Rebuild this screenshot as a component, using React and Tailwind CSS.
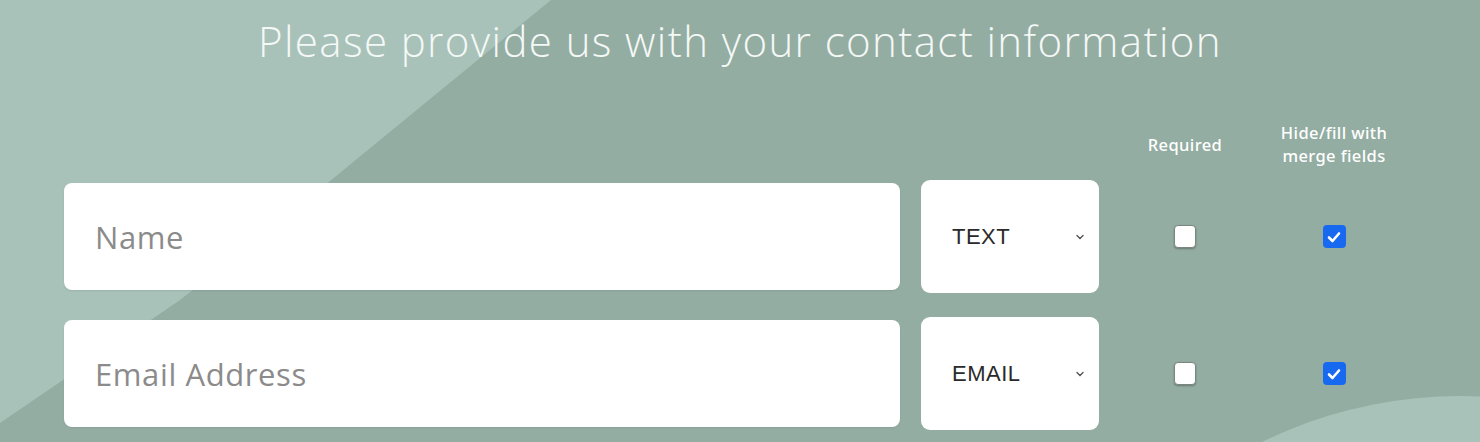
import React from "react";

function Box({ checked }) {
  if (checked) {
    return (
      <div className="w-[23px] h-[23px] rounded-[4px] bg-[#1769f0] flex items-center justify-center">
        <svg width="16" height="16" viewBox="0 0 16 16">
          <path d="M3 8.5 L6.5 12 L13 4.5" fill="none" stroke="white" strokeWidth="2.6" strokeLinecap="round" strokeLinejoin="round" />
        </svg>
      </div>
    );
  }
  return <div className="w-[22px] h-[23px] rounded-[4px] bg-white border border-[#7a8781] shadow-[0_1px_2px_rgba(0,0,0,0.3)]" />;
}

function Row({ placeholder, type, mt }) {
  return (
    <div className={`flex items-center ${mt}`}>
      <input
        readOnly
        placeholder={placeholder}
        className="w-[836px] h-[107px] rounded-[8px] bg-white pl-[31px] text-[31px] tracking-[0.6px] text-[#555] placeholder:text-[#8b8b8b] outline-none shadow-[0_1px_2px_rgba(0,0,0,0.08)]"
        style={{ fontFamily: '"Open Sans", sans-serif' }}
      />
      <div className="ml-[21px] w-[178px] h-[113px] rounded-[9px] bg-white flex items-center pl-[31px] pr-[14px] justify-between">
        <span className="text-[22px] text-[#2a2a2a] tracking-[0.5px]" style={{ fontFamily: '"Liberation Sans", Arial, sans-serif' }}>{type}</span>
        <svg width="10" height="8" viewBox="0 0 10 8">
          <path d="M2 2.5 L5 5.5 L8 2.5" fill="none" stroke="#555" strokeWidth="1.4" strokeLinecap="round" />
        </svg>
      </div>
      <div className="w-[172px] flex justify-center">
        <Box checked={false} />
      </div>
      <div className="w-[126px] flex justify-center">
        <Box checked={true} />
      </div>
    </div>
  );
}

export default function App() {
  return (
    <div className="relative w-[1480px] h-[442px] overflow-hidden bg-[#94ada2]">
      <svg className="absolute inset-0" width="1480" height="442" viewBox="0 0 1480 442">
        <polygon points="0,0 551,0 330,181 180,300 0,423" fill="#a8c2b9" />
        <circle cx="1460" cy="845" r="449" fill="#a8c2b9" />
      </svg>
      <div className="relative flex flex-col">
        <h1
          className="text-center text-[42px] leading-[50px] mt-[16px] font-light tracking-[1.4px] text-[#f4f8f6]"
          style={{ fontFamily: '"Open Sans", sans-serif' }}
        >
          Please provide us with your contact information
        </h1>
        <div className="flex items-center pl-[1099px] mt-[53px] h-[50px] text-white text-[16.5px] font-medium tracking-[0.4px] leading-[23px]" style={{ fontFamily: '"Noto Sans", sans-serif' }}>
          <div className="w-[172px] text-center">Required</div>
          <div className="w-[126px] text-center">Hide/fill with<br />merge fields</div>
        </div>
        <div className="pl-[64px] mt-[11px]">
          <Row placeholder="Name" type="TEXT" mt="" />
          <Row placeholder="Email Address" type="EMAIL" mt="mt-[24px]" />
        </div>
      </div>
    </div>
  );
}
